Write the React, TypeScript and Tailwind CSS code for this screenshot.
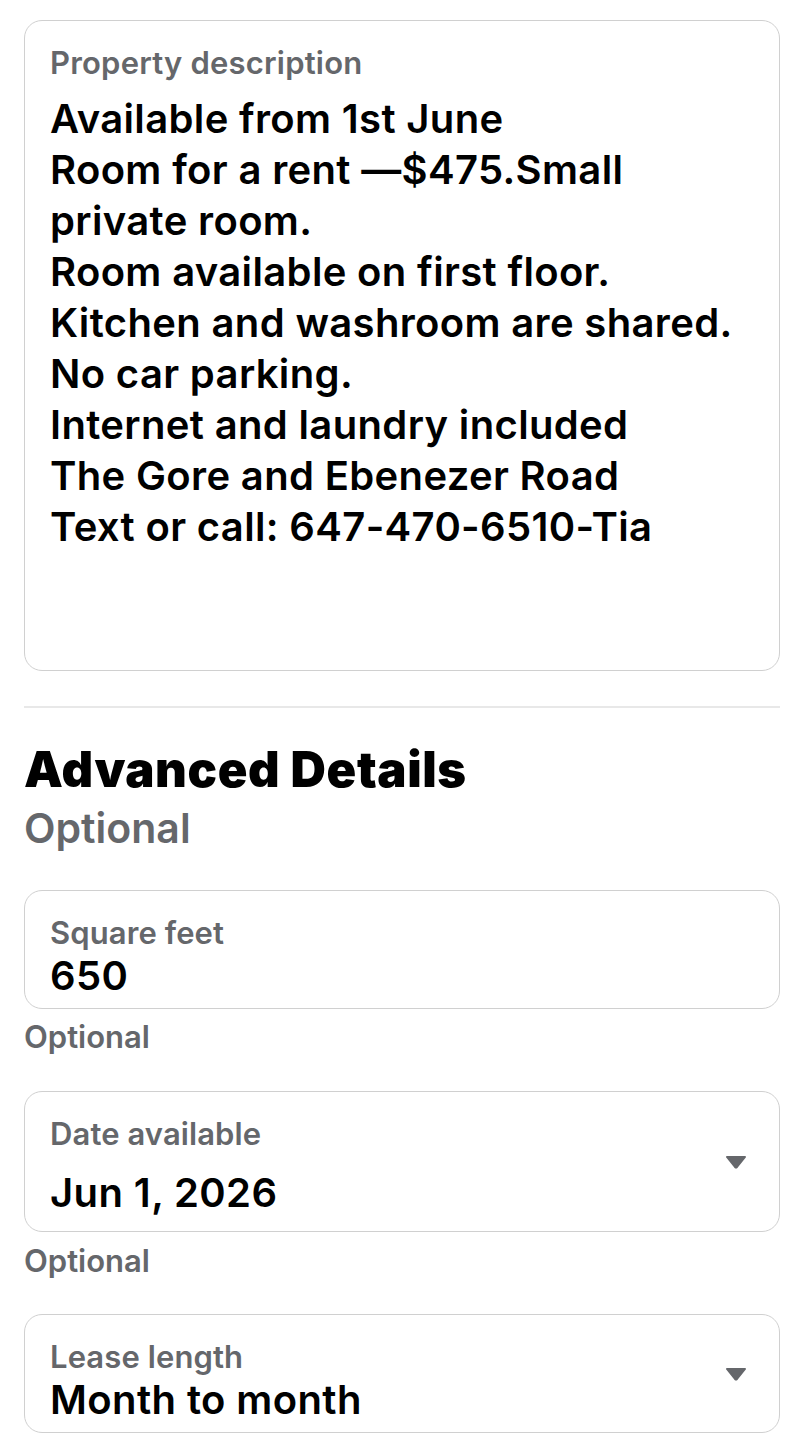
const description = `Available from 1st June
Room for a rent —$475.Small
private room.
Room available on first floor.
Kitchen and washroom are shared.
No car parking.
Internet and laundry included
The Gore and Ebenezer Road
Text or call: 647-470-6510-Tia`;

function Caret() {
  return (
    <svg width="22" height="14" viewBox="0 0 22 14" className="shrink-0">
      <path d="M2 2 H20 L12 12 Q11 13 10 12 Z" fill="#65676b" stroke="#65676b" strokeWidth="2" strokeLinejoin="round" />
    </svg>
  );
}

function Field({ label, value, select = false, tall = false }: { label: string; value: string; select?: boolean; tall?: boolean }) {
  return (
    <div
      className={
        "flex items-center border-[1.5px] border-[#d0d0d0] rounded-[18px] pl-[25px] pr-[32px] " +
        (tall ? "h-[141px]" : "h-[119px]")
      }
    >
      <div className="flex-1 flex flex-col self-start pt-[23px]">
        <span className="text-[31px] leading-[38px] font-semibold text-[#65676b] tracking-[0.1px]">{label}</span>
        <span className={"text-[40px] font-semibold text-black tracking-[0.4px] leading-[47px] " + (tall ? "mt-[16px]" : "")}>
          {value}
        </span>
      </div>
      {select && <Caret />}
    </div>
  );
}

export default function App() {
  return (
    <div className="min-h-screen bg-white px-[24px] pt-[20px] pb-[10px]" style={{ fontFamily: "Inter, 'Noto Sans', sans-serif" }}>
      {/* Description card */}
      <div className="h-[651px] border-[1.5px] border-[#d0d0d0] rounded-[18px] pl-[25px] pr-[20px] pt-[23px]">
        <div className="text-[31px] leading-[38px] font-semibold text-[#65676b] tracking-[0.2px]">Property description</div>
        <div className="mt-[11px] whitespace-pre-line text-[40px] leading-[51px] font-semibold text-black tracking-[0.35px]">
          {description}
        </div>
      </div>

      <div className="mt-[35px] h-[2px] bg-[#e8e8e8]" />

      <h2 className="mt-[36px] text-[49px] leading-[52px] font-black text-black tracking-[0.6px]">Advanced Details</h2>
      <div className="mt-[9px] text-[41px] leading-[46px] font-semibold text-[#65676b]">Optional</div>

      <div className="mt-[39px]">
        <Field label="Square feet" value="650" />
        <div className="mt-[9px] text-[31px] leading-[38px] font-semibold text-[#65676b]">Optional</div>
      </div>

      <div className="mt-[35px]">
        <Field label="Date available" value="Jun 1, 2026" select tall />
        <div className="mt-[10px] text-[31px] leading-[38px] font-semibold text-[#65676b]">Optional</div>
      </div>

      <div className="mt-[34px]">
        <Field label="Lease length" value="Month to month" select />
      </div>
    </div>
  );
}
